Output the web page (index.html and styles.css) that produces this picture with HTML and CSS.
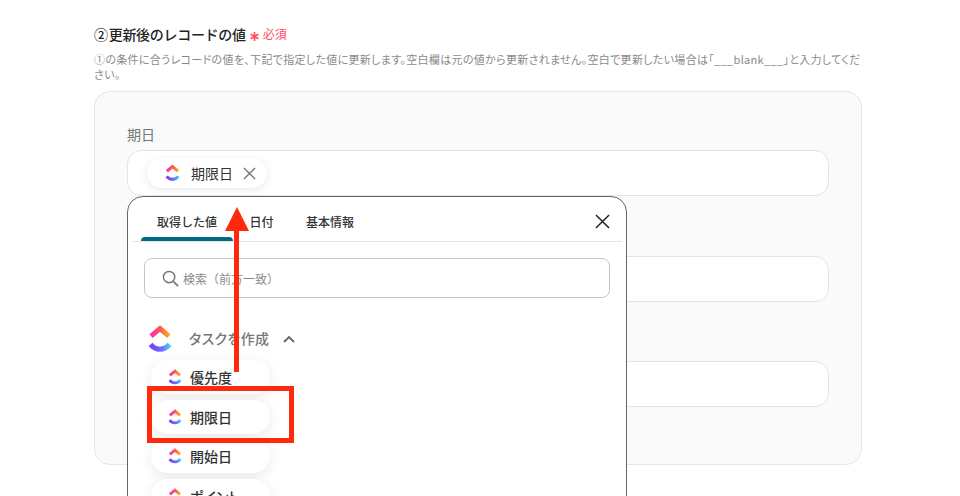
FILE: index.html
```html
<!DOCTYPE html>
<html lang="ja">
<head>
<meta charset="utf-8">
<title>更新後のレコードの値</title>
<link rel="stylesheet" href="styles.css">
</head>
<body>
<svg class="defs" width="0" height="0" aria-hidden="true">
  <defs>
    <linearGradient id="gTop" x1="0" y1="0" x2="1" y2="0">
      <stop offset="0" stop-color="#ff2fb3"/><stop offset="0.55" stop-color="#ff5c4d"/><stop offset="1" stop-color="#ffb01f"/>
    </linearGradient>
    <linearGradient id="gBot" x1="0" y1="0" x2="1" y2="0">
      <stop offset="0" stop-color="#7a3ff2"/><stop offset="0.6" stop-color="#6a6cff"/><stop offset="1" stop-color="#49c6ff"/>
    </linearGradient>
    <symbol id="cu" viewBox="0 0 24 28">
      <path d="M3 11.2 12 3.600l9 7.600" fill="none" stroke="url(#gTop)" stroke-width="5" stroke-linejoin="miter"/>
      <path d="M2.600 19.400c2.400 3 5.600 4.800 9.400 4.800s7-1.800 9.400-4.800" fill="none" stroke="url(#gBot)" stroke-width="5"/>
    </symbol>
  </defs>
</svg>
<main class="page">
  <h2 class="title"><span class="title-num">②</span>更新後のレコードの値<span class="req"><svg class="star" viewBox="0 0 10 10"><path d="M5 0v10M.7 2.500l8.600 5M9.300 2.500l-8.600 5" stroke="#ff4d5e" stroke-width="1.900" fill="none"/></svg>必須</span></h2>
  <p class="help">①の条件に合うレコードの値を、下記で指定した値に更新します。空白欄は元の値から更新されません。空白で更新したい場合は「___blank___」と入力してください。</p>
  <section class="panel">
    <label class="label">期日</label>
    <div class="field">
      <span class="chip">
        <svg class="ic"><use href="#cu"/></svg>
        <span class="chip-text">期限日</span>
        <svg class="chip-x" viewBox="0 0 14 14"><path d="M1 1l12 12M13 1 1 13" stroke="#777" stroke-width="1.500" fill="none"/></svg>
      </span>
    </div>
    <label class="label">開始日</label>
    <div class="field"></div>
    <label class="label label-last">ポイント</label>
    <div class="field"></div>
  </section>
</main>

<div class="popup">
  <div class="tabs">
    <span class="tab active">取得した値</span>
    <span class="tab">日付</span>
    <span class="tab">基本情報</span>
    <svg class="close" viewBox="0 0 16 16"><path d="M1 1l14 14M15 1 1 15" stroke="#222" stroke-width="1.600" fill="none"/></svg>
  </div>
  <div class="search">
    <svg class="search-ic" viewBox="0 0 18 18"><circle cx="7.500" cy="7.500" r="6" fill="none" stroke="#777" stroke-width="1.600"/><path d="M12 12l5 5" stroke="#777" stroke-width="1.800"/></svg>
    <span class="search-text">検索（前方一致）</span>
  </div>
  <div class="group">
    <svg class="group-ic"><use href="#cu"/></svg>
    <span class="group-text">タスクを作成</span>
    <svg class="chev" viewBox="0 0 12 8"><path d="M1 7l5-5 5 5" fill="none" stroke="#666" stroke-width="1.800"/></svg>
  </div>
  <ul class="list">
    <li class="item"><svg class="ic-s"><use href="#cu"/></svg>優先度</li>
    <li class="item"><svg class="ic-s"><use href="#cu"/></svg>期限日</li>
    <li class="item"><svg class="ic-s"><use href="#cu"/></svg>開始日</li>
    <li class="item"><svg class="ic-s"><use href="#cu"/></svg>ポイント</li>
  </ul>
</div>

<div class="arrow-shaft"></div>
<div class="arrow-head"></div>
<div class="mark"></div>
</body>
</html>
```
FILE: styles.css
```css
* { box-sizing: border-box; }
html, body { margin: 0; padding: 0; }
body {
  width: 960px;
  height: 496px;
  overflow: hidden;
  position: relative;
  background: #fff;
  font-family: "Noto Sans CJK JP", "Noto Sans", sans-serif;
  font-feature-settings: "palt";
  color: #222;
}
.defs { position: absolute; }
.page { width: 768px; margin-left: 94px; padding-top: 24px; }
.title {
  margin: 0;
  height: 20px;
  font-size: 14px;
  line-height: 20px;
  font-weight: 500;
  color: #222;
  font-feature-settings: normal;
  letter-spacing: -0.3px;
  display: flex;
  align-items: center;
}
.title-num { margin-right: 1px; }
.req { display: inline-flex; align-items: center; margin-left: 4px; color: #ff4d5e; font-size: 12px; font-weight: 400; letter-spacing: 0; }
.star { width: 9px; height: 9px; margin: 4px 4px 0 0; flex: none; }
.help {
  margin: 8px 0 0;
  font-size: 11px;
  line-height: 15px;
  color: #8a8a8a;
  letter-spacing: 0.32px;
}
.panel {
  margin-top: 9px;
  height: 374px;
  border: 1px solid #e6e6e6;
  border-radius: 16px;
  background: #fafafa;
  padding: 31px 32px 0;
}
.label {
  display: block;
  height: 27px;
  font-size: 14px;
  line-height: 22px;
  color: #777;
}
.label-last { margin-top: 32px; }
.label + .field + .label:not(.label-last) { margin-top: 33px; }
.field {
  height: 46px;
  background: #fff;
  border: 1px solid #e4e4e4;
  border-radius: 14px;
  padding: 7px 19px;
}
.chip {
  width: 120px;
  height: 30px;
  display: flex;
  align-items: center;
  padding-left: 18px;
  background: #fff;
  border-radius: 15px;
  box-shadow: 0 2px 10px rgba(0, 0, 0, 0.09);
}
.ic { width: 15px; height: 18px; flex: none; }
.chip-text { font-size: 14px; margin-left: 11px; color: #333; }
.chip-x { width: 13px; height: 13px; margin-left: 10px; flex: none; }

.popup {
  position: absolute;
  left: 127px;
  top: 196px;
  width: 500px;
  height: 330px;
  background: #fff;
  border: 1px solid #666;
  border-radius: 16px;
  padding: 0 4px;
}
.tabs {
  height: 45px;
  display: flex;
  align-items: center;
  gap: 32.5px;
  padding: 6px 0 0 25px;
  border-bottom: 1px solid #e6e6e6;
  position: relative;
  font-size: 12px;
  font-weight: 500;
  color: #333;
  font-feature-settings: normal;
}
.tab { line-height: 18px; }
.tab.active::after {
  content: "";
  position: absolute;
  left: 9px;
  bottom: 0;
  width: 92px;
  height: 4px;
  border-radius: 4px 4px 0 0;
  background: #006a80;
}
.close { position: absolute; right: 12px; top: 17px; width: 15px; height: 15px; }
.search {
  width: 466px;
  height: 40px;
  margin: 16px 0 0 12px;
  border: 1px solid #c4c4c4;
  border-radius: 8px;
  display: flex;
  align-items: center;
  padding-left: 17px;
}
.search-ic { width: 17px; height: 17px; flex: none; }
.search-text { font-size: 12px; line-height: 18px; color: #8a8a8a; margin: 2px 0 0 4px; font-feature-settings: normal; }
.group {
  height: 30px;
  margin: 26px 0 0 16px;
  display: flex;
  align-items: center;
}
.group-ic { width: 24px; height: 28px; flex: none; }
.group-text { font-size: 14px; line-height: 20px; font-weight: 500; color: #777; margin: 0 0 2px 17px; letter-spacing: 0.35px; }
.chev { width: 12px; height: 8px; margin-left: 14px; }
.list {
  list-style: none;
  margin: 6px 0 0 19px;
  padding: 0;
  display: flex;
  flex-direction: column;
  align-items: flex-start;
  gap: 5.6px;
}
.item {
  height: 34px;
  min-width: 119px;
  padding: 0 19px 0 17px;
  display: flex;
  align-items: center;
  gap: 8px;
  background: #fff;
  border-radius: 17px;
  font-size: 14px;
  font-weight: 500;
  color: #333;
  box-shadow: 0 3px 14px rgba(0, 0, 0, 0.09);
}
.ic-s { width: 14px; height: 16px; flex: none; }

.arrow-shaft { position: absolute; left: 234px; top: 225px; width: 5px; height: 147px; background: #ff2a0d; }
.arrow-head {
  position: absolute;
  left: 225px;
  top: 207px;
  width: 24px;
  height: 24px;
  background: #ff2a0d;
  clip-path: polygon(50% 0, 100% 100%, 0 100%);
}
.mark {
  position: absolute;
  left: 147px;
  top: 386px;
  width: 147px;
  height: 57px;
  border: 5px solid #ff2a0d;
}
```
